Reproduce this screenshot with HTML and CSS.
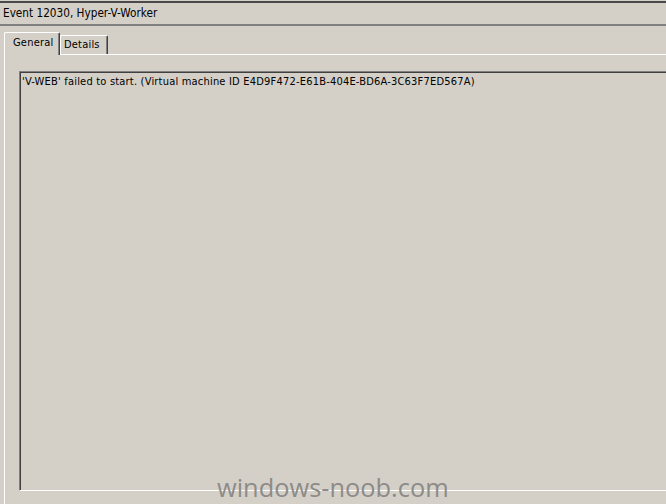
FILE: index.html
```html
<!DOCTYPE html>
<html>
<head>
<meta charset="utf-8">
<link rel="stylesheet" href="styles.css">
</head>
<body>
<div class="window">
  <div class="titlebar">Event 12030, Hyper-V-Worker</div>
  <div class="tabstrip">
    <div class="tab active">General</div>
    <div class="tab">Details</div>
  </div>
  <div class="panel">
    <div class="textbox">'V-WEB' failed to start. (Virtual machine ID E4D9F472-E61B-404E-BD6A-3C63F7ED567A)</div>
  </div>
  <div class="watermark">windows-noob.com</div>
</div>
</body>
</html>
```
FILE: styles.css
```css
html, body {
  margin: 0;
  padding: 0;
  background: #d4d0c8;
}
.window {
  position: relative;
  width: 666px;
  height: 504px;
  overflow: hidden;
  background: #d4d0c8;
  font-family: "DejaVu Sans Condensed", "DejaVu Sans", sans-serif;
  font-size: 11px;
  color: #000;
}
.titlebar {
  margin-top: 1px;
  border-top: 2px solid #4a4a4a;
  border-bottom: 2px solid #808080;
  height: 21px;
  line-height: 21px;
  padding-left: 3px;
  font-size: 11.7px;
  white-space: nowrap;
}
.tabstrip {
  display: flex;
  align-items: flex-end;
  height: 28px;
  padding-left: 4px;
  position: relative;
  z-index: 1;
}
.tab {
  box-sizing: border-box;
  height: 19px;
  width: 48px;
  border-left: 1px solid #fff;
  border-top: 1px solid #fff;
  border-right: 1px solid #404040;
  box-shadow: inset -1px 0 0 #808080;
  border-radius: 2px 2px 0 0;
  padding-left: 3px;
  line-height: 17px;
  letter-spacing: 0.2px;
  background: #d4d0c8;
}
.tab.active {
  height: 23px;
  width: 56px;
  margin-bottom: -1px;
  padding-left: 8px;
  line-height: 20px;
}
.panel {
  width: 700px;
  height: 460px;
  margin-left: 4px;
  border-top: 1px solid #fff;
  border-left: 1px solid #fff;
  padding: 16px 0 0 14px;
  box-sizing: border-box;
}
.textbox {
  box-sizing: border-box;
  width: 700px;
  height: 420px;
  border-top: 1px solid #808080;
  border-left: 1px solid #808080;
  border-bottom: 1px solid #fff;
  box-shadow: inset 1px 1px 0 #404040;
  padding: 3px 0 0 2px;
  line-height: 13px;
  letter-spacing: 0.2px;
  white-space: nowrap;
}
.watermark {
  position: absolute;
  left: 217px;
  top: 471px;
  font-family: "Open Sans", "Noto Sans", sans-serif;
  font-size: 25.4px;
  line-height: 32px;
  color: #8d8b88;
  white-space: nowrap;
}
```
